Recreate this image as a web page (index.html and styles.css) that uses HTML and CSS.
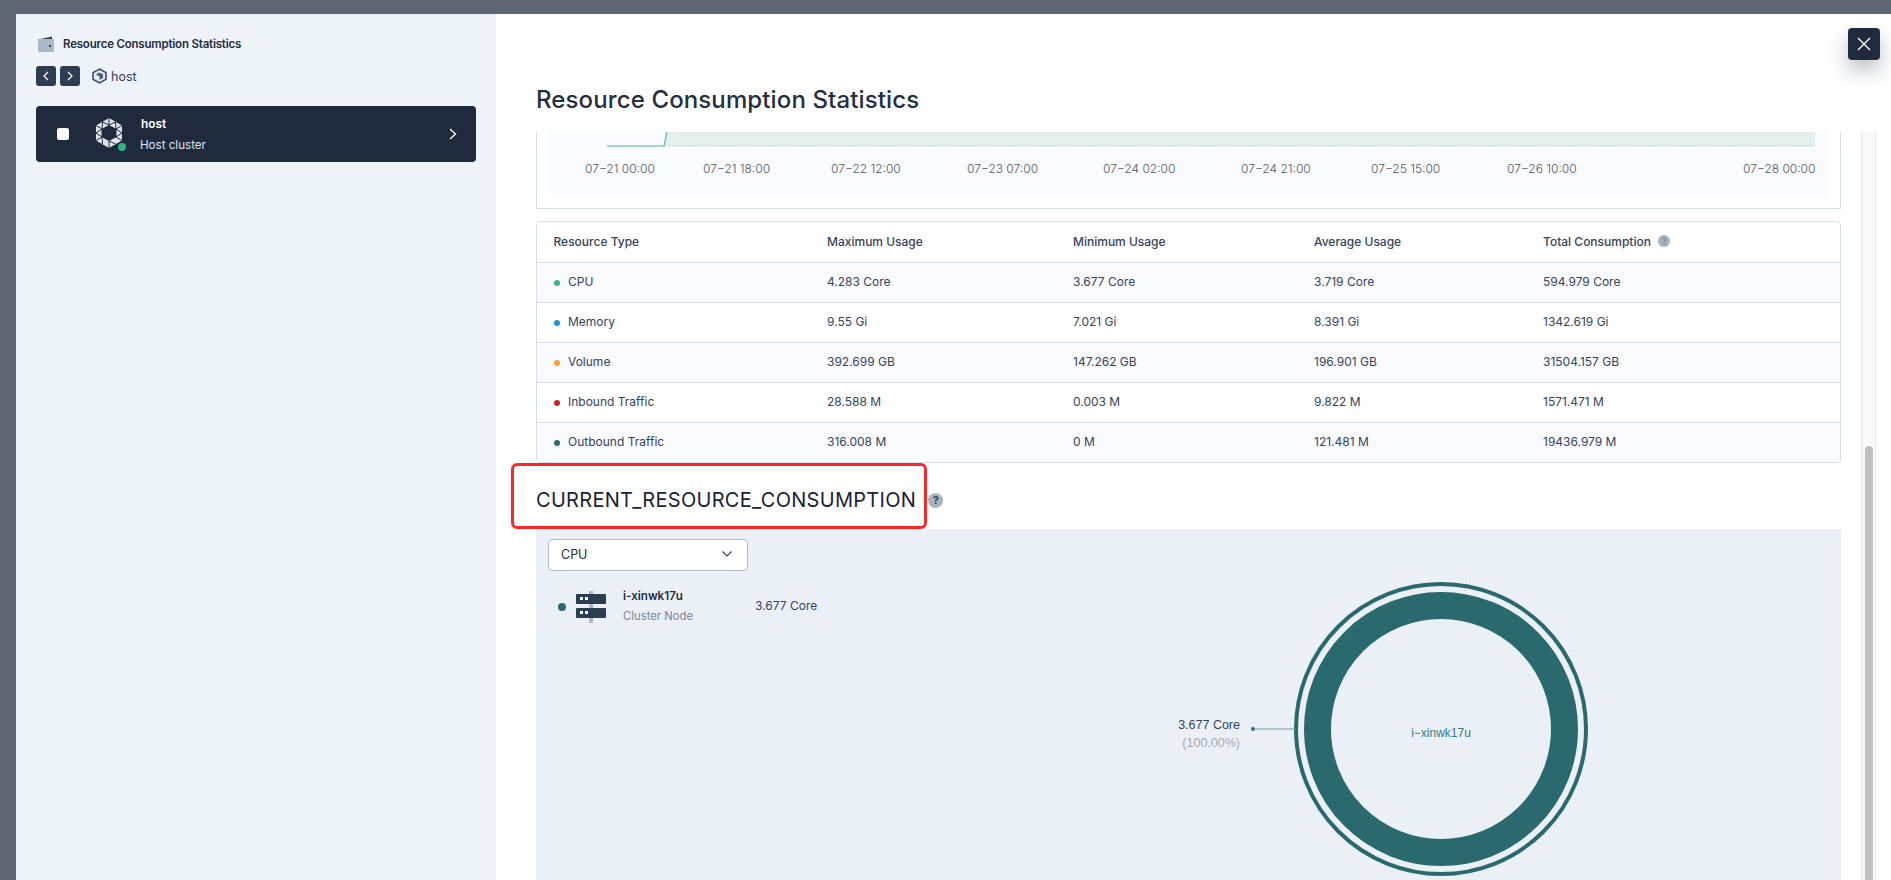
FILE: index.html
```html
<!DOCTYPE html>
<html lang="en">
<head>
<meta charset="utf-8">
<title>Resource Consumption Statistics</title>
<link rel="stylesheet" href="styles.css">
</head>
<body>
<div class="backdrop">
  <div class="drawer">
    <aside class="sidebar">
      <div class="side-title">
        <svg class="wallet" width="16" height="16" viewBox="0 0 16 16"><path d="M0 3.500 14 .5V4H0z" fill="#36465c"/><rect x="0" y="3" width="16" height="13" rx="1" fill="#a9b8c6"/><rect x="11" y="9" width="2" height="2" fill="#36465c"/></svg>
        <span>Resource Consumption Statistics</span>
      </div>
      <div class="crumbs">
        <button class="nav-btn"><svg width="20" height="20" viewBox="0 0 20 20"><path d="M12 6l-4 4 4 4" fill="none" stroke="#fff" stroke-width="1.2"/></svg></button>
        <button class="nav-btn"><svg width="20" height="20" viewBox="0 0 20 20"><path d="M8 6l4 4-4 4" fill="none" stroke="#fff" stroke-width="1.2"/></svg></button>
        <svg class="cube" width="15" height="16" viewBox="0 0 15 16"><path d="M7.500 1 14 4.600v6.800L7.500 15 1 11.400V4.600z" fill="#dfe5ee" stroke="#36465c" stroke-width="1.500"/><path d="M4 6.500 7.500 4.500 11 6.500v3.500L7.500 12V8.500z" fill="#36465c" opacity=".85"/><path d="M4 9h3v3z" fill="#fff"/></svg>
        <span class="crumb-text">host</span>
      </div>
      <div class="cluster-card">
        <span class="checkbox"></span>
        <span class="logo-wrap">
          <svg width="28" height="34" viewBox="0 0 28 34"><path d="M14 1 27 8.500v15L14 31 1 23.500v-15zM14 8 6.500 12v8l7.500 4 7.500-4v-8z" fill="#dfe3ea" fill-rule="evenodd"/><path d="M14 1v7M7 12 1 8.500M7 12 7.500 5M7 12 1 16M7 20 1 16M7 20 1 23.500M7 20 7.500 27M14 24v7M14 24 20.500 27M21 20l6 3.500M21 20l6-4M21 12l6 4M21 12l6-3.500M21 12 20.500 5M14 8 7.500 5M14 8 20.500 5" fill="none" stroke="#1f2a3d" stroke-width="1"/></svg>
          <span class="status-dot"></span>
        </span>
        <div class="card-text">
          <strong>host</strong>
          <span>Host cluster</span>
        </div>
        <svg class="card-chevron" width="12" height="16" viewBox="0 0 12 16"><path d="M3 3l5.500 5L3 13" fill="none" stroke="#fff" stroke-width="1.300"/></svg>
      </div>
    </aside>
    <main class="main">
      <h1 class="page-title">Resource Consumption Statistics</h1>
      <div class="scroll-wrap">
        <div class="content">
          <section class="chart-card">
            <div class="chart-inner">
              <svg class="chart" width="1279" height="64" viewBox="0 0 1279 64">
                <rect x="116" y="0" width="1150" height="14" fill="#e3f0ec"/>
                <path d="M58 14H1266" stroke="#b9d6cc" stroke-width="1" stroke-dasharray="1.500 1" fill="none"/>
                <path d="M58 14H115L118 0" stroke="#5cc29a" stroke-width="1.200" fill="none"/>
                <g class="tick">
                  <text x="36" y="41">07−21 00:00</text>
                  <text x="154" y="41">07−21 18:00</text>
                  <text x="282" y="41">07−22 12:00</text>
                  <text x="418" y="41">07−23 07:00</text>
                  <text x="554" y="41">07−24 02:00</text>
                  <text x="692" y="41">07−24 21:00</text>
                  <text x="822" y="41">07−25 15:00</text>
                  <text x="958" y="41">07−26 10:00</text>
                  <text x="1194" y="41">07−28 00:00</text>
                </g>
              </svg>
            </div>
          </section>
          <table class="usage">
            <thead>
              <tr><th>Resource Type</th><th>Maximum Usage</th><th>Minimum Usage</th><th>Average Usage</th><th>Total Consumption <span class="help small">?</span></th></tr>
            </thead>
            <tbody>
              <tr><td><i class="dot green"></i>CPU</td><td>4.283 Core</td><td>3.677 Core</td><td>3.719 Core</td><td>594.979 Core</td></tr>
              <tr><td><i class="dot blue"></i>Memory</td><td>9.55 Gi</td><td>7.021 Gi</td><td>8.391 Gi</td><td>1342.619 Gi</td></tr>
              <tr><td><i class="dot orange"></i>Volume</td><td>392.699 GB</td><td>147.262 GB</td><td>196.901 GB</td><td>31504.157 GB</td></tr>
              <tr><td><i class="dot red"></i>Inbound Traffic</td><td>28.588 M</td><td>0.003 M</td><td>9.822 M</td><td>1571.471 M</td></tr>
              <tr><td><i class="dot teal"></i>Outbound Traffic</td><td>316.008 M</td><td>0 M</td><td>121.481 M</td><td>19436.979 M</td></tr>
            </tbody>
          </table>
          <div class="section-head">
            <h2>CURRENT_RESOURCE_CONSUMPTION</h2>
            <span class="help">?</span>
            <span class="highlight"></span>
          </div>
          <section class="current">
            <div class="select"><span>CPU</span><svg width="12" height="8" viewBox="0 0 12 8"><path d="M1.500 1.500 6 6l4.500-4.500" fill="none" stroke="#36465c" stroke-width="1.200"/></svg></div>
            <div class="node-row">
              <i class="node-dot"></i>
              <svg class="server" width="30" height="32" viewBox="0 0 30 32"><rect x="13" y="0" width="4" height="32" fill="#a9b8c6"/><rect x="0" y="3" width="30" height="10" rx="1" fill="#2b3d50"/><rect x="0" y="17" width="30" height="10" rx="1" fill="#2b3d50"/><rect x="4" y="6" width="3" height="3" fill="#fff"/><rect x="9" y="6" width="3" height="3" fill="#fff"/><rect x="4" y="20" width="3" height="3" fill="#fff"/><rect x="9" y="20" width="3" height="3" fill="#fff"/></svg>
              <div class="node-text"><strong>i-xinwk17u</strong><span>Cluster Node</span></div>
              <span class="node-value">3.677 Core</span>
            </div>
            <svg class="donut" width="300" height="300" viewBox="0 0 300 300">
              <circle cx="150" cy="150" r="145" fill="none" stroke="#2a696d" stroke-width="4"/>
              <circle cx="150" cy="150" r="123.500" fill="none" stroke="#2a696d" stroke-width="27"/>
              <text x="150" y="158" class="donut-label">i−xinwk17u</text>
            </svg>
            <div class="callout">
              <div class="callout-text"><span>3.677 Core</span><small>(100.00%)</small></div>
              <svg width="46" height="6" viewBox="0 0 46 6"><circle cx="3" cy="3" r="2" fill="#2a696d"/><path d="M3 3H46" stroke="#6fa0a3" stroke-width="1"/></svg>
            </div>
          </section>
        </div>
        <div class="scrollbar"><span class="thumb"></span></div>
      </div>
    </main>
  </div>
  <button class="close"><svg width="16" height="16" viewBox="0 0 16 16"><path d="M2 2l12 12M14 2 2 14" stroke="#fff" stroke-width="1.400"/></svg></button>
</div>
</body>
</html>
```
FILE: styles.css
```css
* { box-sizing: border-box; }
html, body { margin: 0; height: 100%; overflow: hidden; }
body { font-family: Inter, "Liberation Sans", sans-serif; color: #242e42; font-size: 12px; }
.backdrop { position: relative; height: 880px; background: #5f6673; padding: 14px 0 0 16px; }
.drawer { display: flex; height: 866px; background: #fff; }
.sidebar { width: 480px; flex: none; background: #eef2f9; padding: 22px 20px 0; }
.side-title { display: flex; align-items: center; gap: 9px; height: 16px; padding-left: 2px; font-size: 11.500px; letter-spacing: -.2px; font-weight: 600; }
.crumbs { display: flex; align-items: center; margin-top: 14px; height: 20px; gap: 4px; }
.nav-btn { width: 20px; height: 20px; padding: 0; border: 0; border-radius: 3px; background: #2f3d52; display: block; }
.cube { margin-left: 8px; }
.crumb-text { font-size: 12.500px; color: #36435c; }
.cluster-card { display: flex; align-items: center; height: 56px; margin-top: 20px; border-radius: 4px; background: #1f2a3d; color: #fff; padding: 0 17px 0 21px; }
.checkbox { width: 12px; height: 12px; border-radius: 2px; background: #fff; flex: none; }
.logo-wrap { position: relative; width: 28px; height: 34px; margin-left: 26px; flex: none; }
.logo-wrap svg { display: block; }
.status-dot { position: absolute; left: 23px; top: 26px; width: 8px; height: 8px; border-radius: 50%; background: #2fb380; }
.card-text { display: flex; flex-direction: column; gap: 8px; margin-left: 17px; padding-top: 2px; flex: 1; line-height: 13px; }
.card-text strong { font-weight: 600; font-size: 11.800px; padding-left: 1px; }
.card-text span { color: #dfe5ee; font-size: 11.600px; }
.main { flex: 1; min-width: 0; display: flex; flex-direction: column; padding-left: 15px; }
.page-title { margin: 0 0 0 25px; height: 118px; padding-top: 72px; font-size: 24px; letter-spacing: .12px; line-height: 28px; font-weight: 500; color: #242e42; }
.scroll-wrap { flex: 1; min-height: 0; display: flex; overflow: hidden; padding-left: 25px; }
.content { width: 1305px; flex: none; }
.chart-card { height: 77px; border: 1px solid #d8dee9; border-top: 0; padding: 0 12px; }
.chart-inner { height: 64px; background: #f9fbfe; border-radius: 0 0 4px 4px; }
.chart { display: block; }
.tick text { font-family: Inter, "Liberation Sans", sans-serif; font-size: 12px; font-weight: 300; fill: #4f5a6b; }
.usage { width: 1305px; margin-top: 12px; border-collapse: separate; border-spacing: 0; border: 1px solid #d8dee9; border-radius: 4px; table-layout: fixed; }
.usage th, .usage td { text-align: left; padding: 0 0 2px 0; height: 40px; border-top: 1px solid #d8dee9; color: #36435c; font-size: 12px; white-space: nowrap; font-weight: 400; }
.usage th { border-top: 0; font-weight: 500; }
.usage th:nth-child(1), .usage td:nth-child(1) { width: 290px; padding-left: 16.500px; }
.usage th:nth-child(2), .usage td:nth-child(2) { width: 246px; }
.usage th:nth-child(3), .usage td:nth-child(3) { width: 241px; }
.usage th:nth-child(4), .usage td:nth-child(4) { width: 229px; }
.usage tbody tr:nth-child(odd) td { background: #f9fbfe; }
.dot { display: inline-block; width: 6px; height: 6px; border-radius: 50%; margin-right: 8.500px; vertical-align: 0; }
.green { background: #37b584; }
.blue { background: #1c95d0; }
.orange { background: #f9a133; }
.red { background: #ca2621; }
.teal { background: #2a696d; }
.help { display: inline-flex; align-items: center; justify-content: center; width: 15px; height: 15px; border-radius: 50%; background: #a6b4c4; color: #36435c; font-size: 11px; font-weight: 700; flex: none; }
.help.small { width: 12px; height: 12px; font-size: 8px; font-weight: 500; margin-left: 4px; vertical-align: 2px; color: #6e7c90; }
.section-head { position: relative; display: flex; align-items: center; gap: 12px; height: 66px; padding-top: 8px; }
.section-head h2 { margin: 0; font-size: 20px; letter-spacing: .3px; line-height: 24px; font-weight: 400; color: #1a2334; }
.highlight { position: absolute; left: -25px; top: 0; width: 416px; height: 66px; border: 3px solid #fb2a26; border-radius: 6px; pointer-events: none; }
.current { position: relative; height: 500px; padding: 10px 12px; background-color: #ecf1f8; background-image: radial-gradient(#e9eef6 1px, transparent 1px); background-size: 4px 4px; }
.select { display: flex; align-items: center; justify-content: space-between; width: 200px; height: 32px; padding: 0 14px 2px 12px; background: #fff; border: 1px solid #b4bcc9; border-radius: 4px; font-size: 12.500px; font-weight: 400; }
.node-row { display: flex; align-items: center; margin-top: 20px; height: 32px; padding-left: 10px; }
.node-dot { width: 8px; height: 8px; border-radius: 50%; background: #2a696d; flex: none; margin-bottom: 1px; }
.server { margin-left: 10px; flex: none; }
.node-text { display: flex; flex-direction: column; gap: 7px; margin-left: 17px; width: 132px; line-height: 13px; padding-bottom: 2px; font-size: 11.600px; }
.node-text strong { font-weight: 600; }
.node-text span { color: #79879c; font-size: 11.300px; }
.node-value { color: #36435c; padding-bottom: 4px; }
.donut { position: absolute; left: 755px; top: 50px; }
.donut-label { font-family: "Liberation Sans", sans-serif; font-size: 12px; fill: #3a7a7e; text-anchor: middle; }
.callout { position: absolute; left: 640px; top: 187px; display: flex; align-items: flex-start; gap: 10px; }
.callout svg { margin-top: 10px; display: block; }
.callout-text { display: flex; flex-direction: column; align-items: flex-end; font-family: "Liberation Sans", sans-serif; font-size: 12.500px; line-height: 18px; color: #36435c; width: 64px; white-space: nowrap; }
.callout-text small { font-size: 12.500px; color: #a5a8ad; }
.scrollbar { width: 15px; margin-left: 20px; flex: none; position: relative; background: #f9f9f9; border-left: 1px solid #e8e8e8; border-right: 1px solid #e8e8e8; }
.thumb { position: absolute; left: 3px; width: 8px; top: 314px; bottom: 0; background: #bfbfbf; border-radius: 4px 4px 0 0; }
.close { position: absolute; left: 1848px; top: 28px; width: 32px; height: 32px; padding: 0; border: 0; border-radius: 4px; background: #1f2a3d; display: flex; align-items: center; justify-content: center; box-shadow: 0 10px 20px rgba(36,46,66,.3); }
```
